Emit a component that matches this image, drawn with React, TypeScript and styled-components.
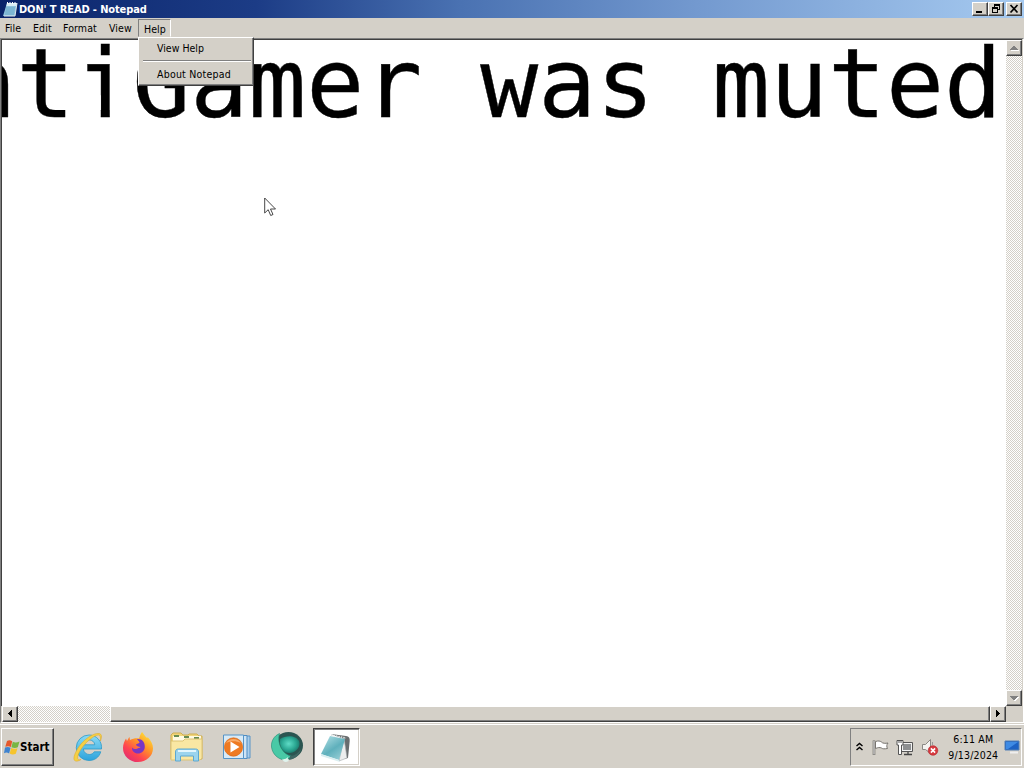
import React from 'react';
import styled, { createGlobalStyle, css } from 'styled-components';

const Global = createGlobalStyle`
  * { box-sizing: border-box; }
  html, body { margin: 0; padding: 0; overflow: hidden; background: #d4d0c8; }
`;

const Desktop = styled.div`
  position: relative;
  width: 1024px;
  height: 768px;
  display: flex;
  flex-direction: column;
  background: #d4d0c8;
  color: #000;
  font-family: 'DejaVu Sans Condensed', 'DejaVu Sans', sans-serif;
  font-stretch: condensed;
  font-size: 10.5px;
  overflow: hidden;
  cursor: default;
`;

const raised = css`
  background: #d4d0c8;
  border: 1px solid;
  border-color: #fff #404040 #404040 #fff;
  box-shadow: inset -1px -1px 0 #808080;
`;

const checker = css`
  background: repeating-conic-gradient(#fff 0 25%, #d4d0c8 0 50%) 0 0 / 2px 2px;
`;

const TitleBar = styled.div`
  height: 18px;
  flex: none;
  display: flex;
  align-items: center;
  padding: 0 2px 0 3px;
  background: linear-gradient(90deg, #0a246a 0, #1c3c86 25%, #4a72b2 45%, #7399cf 68%, #a6caf0 100%);
`;

const Title = styled.span`
  flex: 1;
  margin-left: 1px;
  color: #fff;
  font-weight: bold;
  font-size: 11px;
  letter-spacing: -0.12px;
  white-space: pre;
`;

const Controls = styled.div`
  display: flex;
`;

const ControlButton = styled.div<{ $gap?: boolean }>`
  ${raised}
  width: 16px;
  height: 14px;
  margin-left: ${(p) => (p.$gap ? 2 : 0)}px;
  svg { display: block; }
`;

const MenuBar = styled.div`
  height: 20px;
  flex: none;
  display: flex;
  padding-top: 1px;
  letter-spacing: 0.1px;
`;

const MenuItem = styled.div<{ $w: number; $open?: boolean }>`
  position: relative;
  width: ${(p) => p.$w}px;
  height: 18px;
  line-height: 18px;
  padding-left: 5px;
  border: 1px solid transparent;
  border-width: 0 1px 0 0;
  white-space: nowrap;
  ${(p) => p.$open && css`
    border-width: 1px;
    border-color: #808080 #fff #d4d0c8 #808080;
  `}
`;

const Dropdown = styled.div`
  ${raised}
  position: absolute;
  z-index: 3;
  left: -1px;
  top: 17px;
  width: 116px;
  height: 49px;
`;

const DropItem = styled.div<{ $spacing: number }>`
  height: 20px;
  line-height: 20px;
  padding-left: 18px;
  letter-spacing: ${(p) => p.$spacing}px;
`;

const Separator = styled.div`
  height: 2px;
  margin: 2px 2px 2px 4px;
  border-top: 1px solid #808080;
  border-bottom: 1px solid #fff;
`;

const Editor = styled.div`
  height: 685px;
  flex: none;
  display: flex;
  flex-direction: column;
  border: 1px solid #808080;
  border-color: #808080 #fff #fff #808080;
  padding-right: 1px;
`;

const EditorRow = styled.div`
  flex: 1;
  min-height: 0;
  display: flex;
`;

const Page = styled.div`
  flex: 1;
  min-width: 0;
  background: #fff;
  border: 1px solid #404040;
  border-width: 1px 0 0 1px;
  overflow: hidden;
  display: flex;
  justify-content: flex-end;
`;

const BigText = styled.div`
  flex: none;
  margin-right: 4px;
  font-family: 'DejaVu Sans Mono', monospace;
  font-stretch: normal;
  font-size: 96.3px;
  line-height: 112px;
  margin-top: -12px;
  white-space: pre;
  -webkit-text-stroke: 0.4px #000;
`;

const ShortI = styled.span`
  display: inline-block;
  margin: 0 -1px 0 1px;
  clip-path: polygon(0 0, 59.3% 0, 59.3% 100%, 43.8% 100%, 43.8% 60%, 0 60%);
`;

const VScroll = styled.div`
  ${checker}
  width: 16px;
  display: flex;
  flex-direction: column;
  justify-content: space-between;
  border-top: 1px solid #404040;
`;

const HScroll = styled.div`
  height: 16px;
  flex: none;
  display: flex;
  padding-left: 1px;
`;

const ScrollButton = styled.div`
  ${raised}
  width: 16px;
  height: 16px;
  flex: none;
  svg { display: block; }
`;

const Track = styled.div`
  ${checker}
  width: 92px;
`;

const Thumb = styled.div`
  ${raised}
  flex: 1;
`;

const Corner = styled.div`
  width: 16px;
`;

const Taskbar = styled.div`
  flex: 1;
  display: flex;
  border-top: 1px solid #d4d0c8;
  box-shadow: inset 0 1px 0 #fff;
  padding: 4px 2px 2px 1px;
`;

const Start = styled.div`
  ${raised}
  width: 53px;
  height: 38px;
  display: flex;
  align-items: center;
  padding-left: 2px;
  font-weight: bold;
  font-size: 11.5px;
  svg { flex: none; }
`;

const Launchers = styled.div`
  display: flex;
  flex: 1;
  padding-left: 9px;
`;

const Launcher = styled.div<{ $active?: boolean }>`
  width: ${(p) => (p.$active ? 47 : 49.8)}px;
  height: 38px;
  display: flex;
  align-items: center;
  justify-content: center;
  ${(p) => p.$active && css`
    margin-left: 1px;
    background: #fff;
    border: 1px solid;
    border-color: #404040 #fff #fff #404040;
    box-shadow: inset 1px 1px 0 #808080, inset -1px -1px 0 #d4d0c8;
  `}
`;

const Tray = styled.div`
  width: 172px;
  height: 38px;
  display: flex;
  align-items: center;
  border: 1px solid;
  border-color: #808080 #fff #fff #808080;
  padding-left: 4px;
`;

const TrayIcons = styled.div`
  display: flex;
  align-items: center;
  gap: 7.5px;
  svg { flex: none; }
`;

const Clock = styled.div`
  flex: 1;
  margin-left: 4px;
  text-align: center;
  line-height: 16px;
  letter-spacing: 0.18px;
  white-space: nowrap;
`;

const Pointer = styled.svg`
  position: absolute;
  left: 264px;
  top: 197px;
`;

const PadIcon = () => (
  <svg width="15" height="16" viewBox="0 0 15 16">
    <path d="M4 2h10l-2 13H0z" fill="#8fc3dc" />
    <path d="M4 2h10l-.4 3H3.400z" fill="#d9eef5" />
    <path d="M4.500 1v2M7 1v2M9.500 1v2M12 1v2" stroke="#fff" />
    <path d="M3 7h9M2.700 9h9M2.300 11h9M2 13h9" stroke="#5d9fc2" strokeWidth=".7" />
    <path d="M14 2l-2 13H1" fill="none" stroke="#dfe8ec" />
  </svg>
);

const Arrow = ({ d, dim }: { d: string; dim?: boolean }) => (
  <svg width="14" height="14" viewBox="0 0 14 14" shapeRendering="crispEdges">
    {dim && <path d={d} fill="#fff" transform="translate(1 1)" />}
    <path d={d} fill={dim ? '#808080' : '#000'} />
  </svg>
);

const Chevrons = () => (
  <svg width="9" height="10" viewBox="0 0 9 10">
    <path d="M1.500 4l3-2.500 3 2.500M1.500 8l3-2.500 3 2.500" fill="none" stroke="#000" strokeWidth="1.400" />
  </svg>
);

const Flag = () => (
  <svg width="17" height="17" viewBox="0 0 17 17">
    <path d="M2 1.500v14.500" fill="none" stroke="#6d6b67" strokeWidth="2.600" />
    <path d="M2 2v13.500" fill="none" stroke="#fff" strokeWidth=".9" />
    <path d="M3.500 2.500c3-1 4.500-.5 6 .5 1 1.500 4 1.500 6.500 1-1.500 2-1.500 3.500-.5 5.500-3 .5-5 .5-6-.5-1.700-.8-3.500-.5-6 .5z" fill="#fff" stroke="#77746f" />
  </svg>
);

const Network = () => (
  <svg width="17" height="17" viewBox="0 0 17 17">
    <path d="M5.500 3.500h11v9h-11z" fill="#f2f2f2" stroke="#555" />
    <path d="M7 5h8v6H7z" fill="#8d8f91" />
    <path d="M8 15.500h8M12 13v2" stroke="#444" strokeWidth="1.300" />
    <path d="M1 1.500h6v4.500h-1.500v9.500h-3V6H1z" fill="#fff" stroke="#555" />
    <path d="M3 1v3M5 1v3" stroke="#555" />
  </svg>
);

const Speaker = () => (
  <svg width="18" height="18" viewBox="0 0 18 18">
    <path d="M1.500 6.500h3l5-5v14l-5-4h-3z" fill="#f4f3f1" stroke="#8b8985" />
    <path d="M11.500 4v3" stroke="#999" />
    <circle cx="12" cy="12.500" r="4.800" fill="#d63a3f" stroke="#b4252b" strokeWidth=".6" />
    <path d="M9.900 10.400l4.200 4.200m0-4.200l-4.200 4.200" stroke="#fff" strokeWidth="1.600" />
  </svg>
);

const Display = () => (
  <svg width="17" height="14" viewBox="0 0 17 14">
    <path d="M1 1h14v9H1z" fill="#1d62c4" stroke="#5480b5" />
    <path d="M2 2h12L4 9H2z" fill="#3f8be4" />
    <path d="M6 12.500h8" stroke="#eee" strokeWidth="2" />
  </svg>
);

const WindowsLogo = () => (
  <svg width="16" height="17" viewBox="0 0 16 16">
    <path d="M3 1.500c2-1 3.500-.8 5.200.2L6.900 7.500C5 6.500 3.500 6.500 1.300 7.300z" fill="#e5582c" />
    <path d="M8.800 2.200c2 1 4 .9 6.700-.2l-1.700 5.800c-2 1-4.400.9-6.400-.1z" fill="#78b643" />
    <path d="M1 8.100c2-.8 3.700-.8 5.600.2l-1.500 5.600c-1.700-1-3.400-1-5.100-.2z" fill="#3f83cf" />
    <path d="M7.200 8.600c1.900 1 4 1 6.300.1l-1.700 5.600c-2 .9-4.200.9-6.100-.2z" fill="#f6c42b" />
  </svg>
);

const Explorer = () => (
  <svg width="32" height="32" viewBox="0 0 32 32">
    <defs>
      <linearGradient id="ie" x2="0" y2="1"><stop stopColor="#8adbf6" /><stop offset="1" stopColor="#2da3dc" /></linearGradient>
    </defs>
    <path fillRule="evenodd" d="M17 4a12.500 12.500 0 0 1 12.500 14H11.300c.5 3.500 3 5.500 6 5.500 2.200 0 3.900-.9 4.900-2.700h6.600C27 26.500 22.500 29.500 17 29.500A12.700 12.700 0 1 1 17 4zM11.500 13.800h11.300c-.4-3-2.700-4.900-5.600-4.900-3 0-5.200 1.900-5.700 4.900z" fill="url(#ie)" stroke="#2c9ac9" strokeWidth=".8" />
    <path d="M28.500 10c1.500-4 1.500-7-1.500-7.500-6-.8-16 6.500-21 14.500C2 23.500.500 29 3.500 30c1.500.5 3.500-.2 5.500-1.500-3 1-4-.5-3-4 1.500-5 6.500-12 12.500-16.500C23 4.500 27 3 28 5c.6 1.200.5 3 .5 5z" fill="#f5cf45" stroke="#dca722" strokeWidth=".5" />
  </svg>
);

const Firefox = () => (
  <svg width="32" height="32" viewBox="0 0 32 32">
    <defs>
      <linearGradient id="ff" x1=".85" y1=".05" x2=".2" y2=".9"><stop stopColor="#ffe53a" /><stop offset=".4" stopColor="#ff9528" /><stop offset=".75" stopColor="#ff4450" /><stop offset="1" stopColor="#e6316d" /></linearGradient>
    </defs>
    <path d="M20 1c2 2 2.600 4 4.500 5.500 1 .8 1.300-.3 1.300-.3 3 3 5.200 7 5.200 11A15 14 0 0 1 1 17c0-4 1.500-7 3-9.500L5 10c1-2 1.500-3 2.500-4l.5 3c3-1.500 6-2 9-1.500 1-2.500 1.500-4.500 3-6.500z" fill="url(#ff)" />
    <path d="M15 8c5-.5 8 3 7.800 8-.2 4-3.300 6.500-6.800 6.500s-6.300-2.500-6-6c1.500 1.700 3.500 2 5.500 1 1.500-.8 2.500-.8 3-1.500-2 0-4.500-1-4.500-2.500 1-1 3-.8 3.500-2-.5-1.500-1.500-2-2.500-3.500z" fill="#7a36c4" />
  </svg>
);

const Folder = () => (
  <svg width="34" height="32" viewBox="0 0 34 32">
    <path d="M1 4l2-2h8l2 2h5l1-1h8l2 2h3v23H1z" fill="#f0d57a" stroke="#cfae51" />
    <path d="M3 5h28v6H3z" fill="#fffae1" />
    <path d="M4 5h5M14 6h5M24 7h5" stroke="#668b52" strokeWidth="2" />
    <path d="M1 10h12l2-2h17v19l-2 2H1z" fill="#f9e7a3" stroke="#dcc374" />
    <path d="M5.500 30v-9c0-2 1-3 3-3h17c2 0 3 1 3 3v9h-5v-5h-13v5z" fill="#9bd4ee" stroke="#5ca8d0" />
    <path d="M8 20h18" stroke="#e3f6fd" strokeWidth="2" />
  </svg>
);

const MediaPlayer = () => (
  <svg width="30" height="28" viewBox="0 0 30 28">
    <path d="M8 3h20v22H8z" fill="#a9cdea" stroke="#5993c6" />
    <path d="M5 2.500h20v23H5z" fill="#cfe4f4" stroke="#4f8dc3" />
    <path d="M1.500 2h20v23.500h-20z" fill="#d8eaf6" stroke="#5594c8" />
    <circle cx="11.500" cy="14" r="9.200" fill="#ee7a22" stroke="#d8630f" strokeWidth=".6" />
    <path d="M4 10a9 9 0 0 1 15 0c-5-2.500-10-2.500-15 0z" fill="#f7aa68" />
    <path d="M8.500 8.500v11l9-5.500z" fill="#fff" />
  </svg>
);

const Orb = () => (
  <svg width="34" height="34" viewBox="0 0 34 34">
    <defs>
      <radialGradient id="orb" cx=".45" cy=".45" r=".6"><stop stopColor="#5fdcc6" /><stop offset=".6" stopColor="#2ba893" /><stop offset="1" stopColor="#1a7568" /></radialGradient>
    </defs>
    <ellipse cx="18.500" cy="15.500" rx="14.500" ry="13.500" fill="#2b5551" />
    <path d="M10 9c6-4 16-4 19 2 2 5-2 11-9 12-7 .5-11-6-10-14z" fill="url(#orb)" />
    <path d="M9.500 3.500C4 6 1 11 1.500 17c1 7 6 12 13 13 3-.3 5-1.500 7-4-8-1-15-12-12-22.500z" fill="#49c9a6" stroke="#218a73" strokeWidth=".6" />
    <path d="M20 26c5 0 8-3 11-7-1 6-6 10-12 11z" fill="#3d6763" />
    <path d="M12 29c2 .5 4 0 6-2-.5 2 0 3 1 4l-3 1c-2 0-3-1-4-3z" fill="#e0f4ee" />
  </svg>
);

const Notebook = () => (
  <svg width="34" height="32" viewBox="0 0 34 32">
    <defs>
      <linearGradient id="nb" x2=".7" y2="1"><stop stopColor="#b9e3e8" /><stop offset=".6" stopColor="#5fb0bc" /><stop offset="1" stopColor="#91cbd3" /></linearGradient>
    </defs>
    <path d="M12 3l15 2c3 .5 4 2 3.700 5L29 27l-4 1V8z" fill="#686c6e" />
    <path d="M25 7l3 20-8 3z" fill="#eceeee" stroke="#a3a8aa" strokeWidth=".6" />
    <path d="M11 5l15 3-6 21-18-6z" fill="url(#nb)" />
    <path d="M2 23l18 6 1 2-19-6z" fill="#d9eef0" />
    <path d="M12 4l15 3" stroke="#dfe3e4" strokeWidth="1.500" strokeDasharray="1.500 1" />
  </svg>
);

export default function App() {
  return (
    <Desktop>
      <Global />
      <TitleBar>
        <PadIcon />
        <Title>DON' T READ - Notepad</Title>
        <Controls>
          <ControlButton>
            <svg width="14" height="12" shapeRendering="crispEdges"><path d="M3 8h6v2H3z" /></svg>
          </ControlButton>
          <ControlButton>
            <svg width="14" height="12" shapeRendering="crispEdges">
              <path d="M5 1h6v2H5zM5 3h1v1H5zM10 3h1v4H10zM9 6h1v1H9zM3 4h6v2H3zM3 6h1v4H3zM8 6h1v4H8zM3 9h6v1H3z" />
            </svg>
          </ControlButton>
          <ControlButton $gap>
            <svg width="14" height="12"><path d="M3.500 2l7 7.500m0-7.500l-7 7.500" stroke="#000" strokeWidth="1.700" /></svg>
          </ControlButton>
        </Controls>
      </TitleBar>

      <MenuBar>
        <MenuItem $w={28}>File</MenuItem>
        <MenuItem $w={30}>Edit</MenuItem>
        <MenuItem $w={46}>Format</MenuItem>
        <MenuItem $w={34}>View</MenuItem>
        <MenuItem $w={33} $open>
          Help
          <Dropdown>
            <DropItem $spacing={0}>View Help</DropItem>
            <Separator />
            <DropItem $spacing={0.22}>About Notepad</DropItem>
          </Dropdown>
        </MenuItem>
      </MenuBar>

      <Editor>
        <EditorRow>
          <Page>
            <BigText>nt<ShortI>i</ShortI>Gamer was muted</BigText>
          </Page>
          <VScroll>
            <ScrollButton><Arrow dim d="M3 9h8v-1h-1v-1h-1v-1h-1v-1h-2v1h-1v1h-1v1h-1z" /></ScrollButton>
            <ScrollButton><Arrow dim d="M3 5h8v1h-1v1h-1v1h-1v1h-2v-1h-1v-1h-1v-1h-1z" /></ScrollButton>
          </VScroll>
        </EditorRow>
        <HScroll>
          <ScrollButton><Arrow d="M9 3v7h-1v-1h-1v-1h-1v-1h-1v-1h1v-1h1v-1h1v-1z" /></ScrollButton>
          <Track />
          <Thumb />
          <ScrollButton><Arrow d="M5 3v7h1v-1h1v-1h1v-1h1v-1h-1v-1h-1v-1h-1v-1z" /></ScrollButton>
          <Corner />
        </HScroll>
      </Editor>

      <Taskbar>
        <Start><WindowsLogo />Start</Start>
        <Launchers>
          <Launcher><Explorer /></Launcher>
          <Launcher><Firefox /></Launcher>
          <Launcher><Folder /></Launcher>
          <Launcher><MediaPlayer /></Launcher>
          <Launcher><Orb /></Launcher>
          <Launcher $active><Notebook /></Launcher>
        </Launchers>
        <Tray>
          <TrayIcons>
            <Chevrons />
            <Flag />
            <Network />
            <Speaker />
          </TrayIcons>
          <Clock>6:11 AM<br />9/13/2024</Clock>
          <Display />
        </Tray>
      </Taskbar>

      <Pointer width="13" height="20" viewBox="0 0 13 20">
        <path d="M.7 1v15l3.500-3.300 2.500 5.800 2.300-1-2.500-5.500h5z" fill="#fff" stroke="#333" strokeWidth=".9" />
      </Pointer>
    </Desktop>
  );
}
